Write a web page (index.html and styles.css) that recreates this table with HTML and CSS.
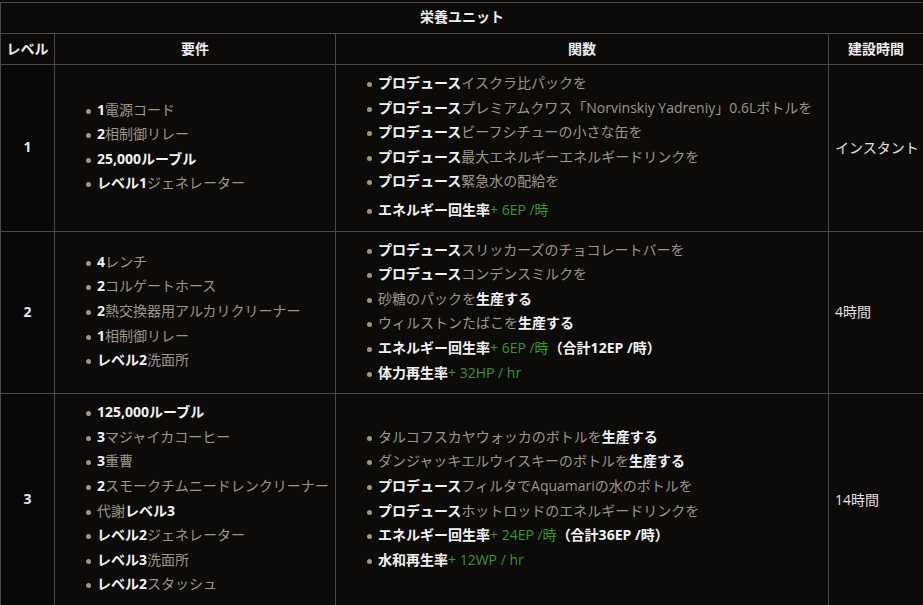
FILE: index.html
```html
<!DOCTYPE html>
<html lang="ja">
<head>
<meta charset="utf-8">
<title>栄養ユニット</title>
<link rel="stylesheet" href="styles.css">
</head>
<body>
<table class="units">
  <colgroup>
    <col class="c-level">
    <col class="c-req">
    <col class="c-func">
    <col class="c-time">
  </colgroup>
  <thead>
    <tr><th colspan="4" class="title">栄養ユニット</th></tr>
    <tr><th>レベル</th><th>要件</th><th>関数</th><th>建設時間</th></tr>
  </thead>
  <tbody>
    <tr>
      <td class="level">1</td>
      <td class="list">
        <ul>
          <li><span class="w">1</span><span class="g">電源コード</span></li>
          <li><span class="w">2</span><span class="g">相制御リレー</span></li>
          <li><span class="w">25,000ルーブル</span></li>
          <li><span class="w">レベル1</span><span class="g">ジェネレーター</span></li>
        </ul>
      </td>
      <td class="list">
        <ul>
          <li><span class="w">プロデュース</span><span class="g">イスクラ比パックを</span></li>
          <li><span class="w">プロデュース</span><span class="g">プレミアムクワス「Norvinskiy Yadreniy」0.6Lボトルを</span></li>
          <li><span class="w">プロデュース</span><span class="g">ビーフシチューの小さな缶を</span></li>
          <li><span class="w">プロデュース</span><span class="g">最大エネルギーエネルギードリンクを</span></li>
          <li><span class="w">プロデュース</span><span class="g">緊急水の配給を</span></li>
          <li class="gap"><span class="w">エネルギー回生率</span><span class="gr">+ 6EP /時</span></li>
        </ul>
      </td>
      <td class="time">インスタント</td>
    </tr>
    <tr>
      <td class="level">2</td>
      <td class="list">
        <ul>
          <li><span class="w">4</span><span class="g">レンチ</span></li>
          <li><span class="w">2</span><span class="g">コルゲートホース</span></li>
          <li><span class="w">2</span><span class="g">熱交換器用アルカリクリーナー</span></li>
          <li><span class="w">1</span><span class="g">相制御リレー</span></li>
          <li><span class="w">レベル2</span><span class="g">洗面所</span></li>
        </ul>
      </td>
      <td class="list">
        <ul>
          <li><span class="w">プロデュース</span><span class="g">スリッカーズのチョコレートバーを</span></li>
          <li><span class="w">プロデュース</span><span class="g">コンデンスミルクを</span></li>
          <li><span class="g">砂糖のパックを</span><span class="w">生産する</span></li>
          <li><span class="g">ウィルストンたばこを</span><span class="w">生産する</span></li>
          <li><span class="w">エネルギー回生率</span><span class="gr">+ 6EP /時</span><span class="w">（合計12EP /時）</span></li>
          <li><span class="w">体力再生率</span><span class="gr">+ 32HP / hr</span></li>
        </ul>
      </td>
      <td class="time">4時間</td>
    </tr>
    <tr>
      <td class="level">3</td>
      <td class="list">
        <ul>
          <li><span class="w">125,000ルーブル</span></li>
          <li><span class="w">3</span><span class="g">マジャイカコーヒー</span></li>
          <li><span class="w">3</span><span class="g">重曹</span></li>
          <li><span class="w">2</span><span class="g">スモークチムニードレンクリーナー</span></li>
          <li><span class="g">代謝</span><span class="w">レベル3</span></li>
          <li><span class="w">レベル2</span><span class="g">ジェネレーター</span></li>
          <li><span class="w">レベル3</span><span class="g">洗面所</span></li>
          <li><span class="w">レベル2</span><span class="g">スタッシュ</span></li>
        </ul>
      </td>
      <td class="list">
        <ul>
          <li><span class="g">タルコフスカヤウォッカのボトルを</span><span class="w">生産する</span></li>
          <li><span class="g">ダンジャッキエルウイスキーのボトルを</span><span class="w">生産する</span></li>
          <li><span class="w">プロデュース</span><span class="g">フィルタでAquamariの水のボトルを</span></li>
          <li><span class="w">プロデュース</span><span class="g">ホットロッドのエネルギードリンクを</span></li>
          <li><span class="w">エネルギー回生率</span><span class="gr">+ 24EP /時</span><span class="w">（合計36EP /時）</span></li>
          <li><span class="w">水和再生率</span><span class="gr">+ 12WP / hr</span></li>
        </ul>
      </td>
      <td class="time">14時間</td>
    </tr>
  </tbody>
</table>
</body>
</html>
```
FILE: styles.css
```css
html, body {
  margin: 0;
  padding: 0;
  background: #0a0908;
}
body {
  padding-top: 2px;
  font-family: "Open Sans", "Noto Sans CJK JP", sans-serif;
  font-size: 14px;
  color: #e6e6e6;
}
.units {
  width: 923px;
  border-collapse: collapse;
  table-layout: fixed;
  background: #0b0a09;
}
.c-level { width: 54px; }
.c-req { width: 281px; }
.c-func { width: 493px; }
.c-time { width: 95px; }

.units th, .units td {
  border: 1px solid #4a4a4a;
}
.units th {
  font-weight: 700;
  text-align: center;
  color: #ececec;
  padding: 5px 0;
  line-height: 20px;
  height: 20px;
}
.units th.title {
  padding: 4px 0 6px;
}
.units td {
  vertical-align: middle;
  padding: 6px 0 8px;
}
.units td.level {
  text-align: center;
  font-weight: 700;
  color: #e6e6e6;
  background: #090807;
}
.units td.list {
  background: #0c0b0a;
}
.units td.time {
  padding-left: 6px;
  color: #e2e2e2;
  background: #0c0b0a;
}
.units ul {
  list-style: none;
  margin: 0;
  padding: 0 0 0 42px;
}
.units li {
  position: relative;
  line-height: 24.6px;
  white-space: nowrap;
}
.units li::before {
  content: "";
  position: absolute;
  left: -11px;
  top: 11px;
  width: 5px;
  height: 5px;
  border-radius: 50%;
  background: #a2967d;
}
.units li.gap {
  margin-top: 4px;
}
.w {
  color: #f2f2f2;
  font-weight: 700;
}
.g {
  color: #9c968a;
}
.gr {
  color: #3a962a;
}
```
